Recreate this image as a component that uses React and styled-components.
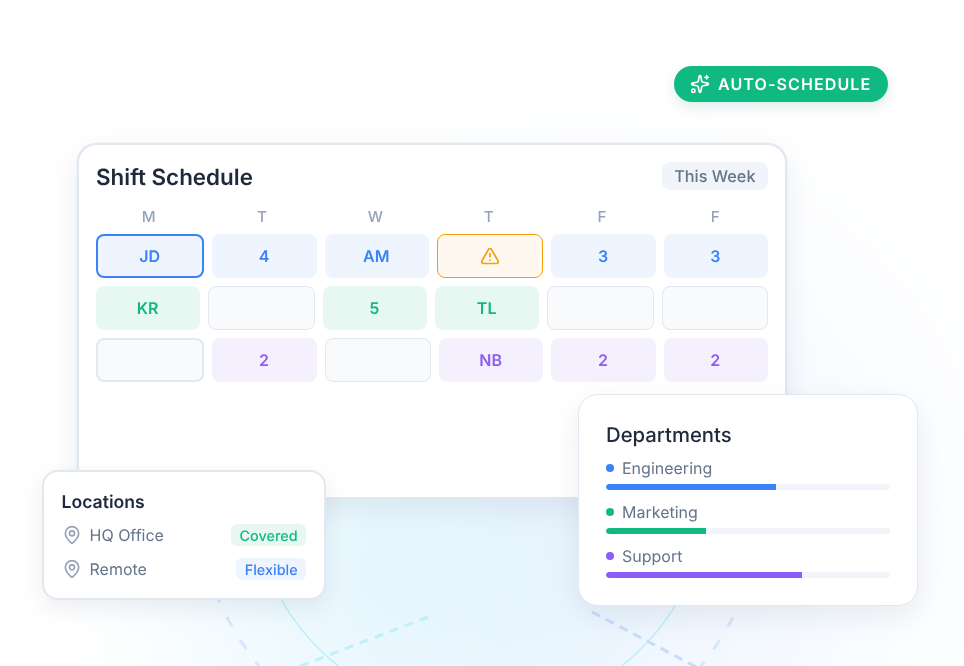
import React from "react";
import styled, { createGlobalStyle } from "styled-components";
import { Sparkles, TriangleAlert, MapPin } from "lucide-react";

const GlobalStyle = createGlobalStyle`
  html, body {
    margin: 0;
    padding: 0;
    background: #fff;
    font-family: "Inter", "Liberation Sans", sans-serif;
    text-rendering: geometricPrecision;
  }
  * {
    box-sizing: border-box;
  }
`;

const Stage = styled.div`
  position: relative;
  width: 964px;
  height: 666px;
  overflow: hidden;
  padding: 143px 177px 0 77px;
  will-change: transform;
  background:
    radial-gradient(circle at 380px 575px, rgba(186, 236, 253, 0.26) 0, rgba(186, 236, 253, 0.15) 160px, rgba(186, 236, 253, 0) 320px),
    radial-gradient(circle at 590px 540px, rgba(191, 219, 254, 0.3) 0, rgba(191, 219, 254, 0.17) 200px, rgba(219, 234, 254, 0.1) 340px, rgba(255, 255, 255, 0) 470px),
    #fff;
`;

const Backdrop = styled.svg`
  position: absolute;
  left: 0;
  top: 0;
  pointer-events: none;
`;

const ScheduleCard = styled.section`
  position: relative;
  height: 356px;
  padding: 18px 17px 0 17px;
  background: #fff;
  border: 2px solid #e2e8f0;
  border-radius: 20px;
  box-shadow: 0 0 0 0.6px rgba(226, 232, 240, 0.7), 0 10px 30px rgba(30, 41, 59, 0.08);
`;

const CardHeader = styled.header`
  display: flex;
  align-items: center;
  justify-content: space-between;
  height: 28px;
`;

const Title = styled.h2`
  margin: 0;
  font-size: 22.4px;
  font-weight: 600;
  color: #1e293b;
`;

const RangeTag = styled.span`
  display: flex;
  align-items: center;
  height: 28px;
  margin-top: -2px;
  padding: 0 12.5px;
  border-radius: 8px;
  background: #f1f5f9;
  color: #64748b;
  font-size: 16.3px;
  font-weight: 500;
`;

const DayRow = styled.div`
  display: flex;
  gap: 8px;
  margin-top: 16px;
  margin-bottom: 7px;
`;

const Day = styled.span`
  flex: 1;
  height: 20px;
  line-height: 20px;
  text-align: center;
  color: #94a3b8;
  font-size: 15.2px;
  font-weight: 500;
`;

const ShiftRows = styled.div`
  display: flex;
  flex-direction: column;
  gap: 8px;
`;

const ShiftRow = styled.div`
  display: flex;
  gap: 8px;
`;

const tones = {
  blue: "background:#eff5fe;color:#3b82f6;",
  green: "background:#e7f8f2;color:#10b981;",
  purple: "background:#f5f0fe;color:#8b5cf6;",
  empty: "background:#f8fafc;border:1px solid #e2e8f0;",
  hollow: "background:#f8fafc;border:2px solid #e2e8f0;",
  active: "background:#eff5fe;color:#3b82f6;border:2px solid #3b82f6;",
  warn: "background:#fff8f0;color:#f59e0b;border:1px solid #f59e0b;",
};

const Cell = styled.div`
  flex: 1;
  height: 44px;
  display: flex;
  align-items: center;
  justify-content: center;
  padding-right: 1px;
  border-radius: 8px;
  font-size: 16px;
  font-weight: 600;
  ${(p) => tones[p.$tone]}
`;

const AutoPill = styled.div`
  position: absolute;
  left: 674px;
  top: 66px;
  width: 214px;
  height: 36px;
  display: flex;
  align-items: center;
  gap: 8px;
  padding-left: 16px;
  border-radius: 18px;
  background: #10b981;
  color: #fff;
  font-size: 16px;
  font-weight: 600;
  letter-spacing: 1.12px;
  box-shadow: 0 4px 12px rgba(16, 185, 129, 0.1), 0 6px 16px rgba(30, 41, 59, 0.05);
`;

const LocationsCard = styled.aside`
  position: absolute;
  left: 42px;
  top: 470px;
  width: 284px;
  height: 130px;
  padding: 19px 18px 0 17.5px;
  background: #fff;
  border: 2px solid #e2e8f0;
  border-radius: 16px;
  box-shadow: 0 8px 24px rgba(30, 41, 59, 0.08);
`;

const LocationsTitle = styled.h3`
  margin: 0 0 3px;
  height: 24px;
  line-height: 24px;
  font-size: 17.6px;
  font-weight: 600;
  color: #1e293b;
`;

const LocationRow = styled.div`
  display: flex;
  align-items: center;
  height: 34px;
  color: #64748b;
  font-size: 16px;
  svg {
    color: #94a3b8;
    margin-right: 8px;
  }
`;

const Badge = styled.span`
  margin-left: auto;
  display: flex;
  align-items: center;
  height: 22px;
  padding: 2px 8.4px 0;
  border-radius: 6px;
  font-size: 14.4px;
  font-weight: 500;
  ${(p) => tones[p.$tone]}
`;

const DepartmentsCard = styled.aside`
  position: absolute;
  left: 578px;
  top: 394px;
  width: 340px;
  height: 212px;
  padding: 28px 27px 0;
  background: #fff;
  border: 1px solid #e2e8f0;
  border-radius: 20px;
  box-shadow: 0 10px 30px rgba(30, 41, 59, 0.08);
`;

const DepartmentsTitle = styled.h3`
  margin: 0 0 11px;
  height: 24px;
  line-height: 24px;
  font-size: 20.3px;
  font-weight: 450;
  color: #1e293b;
`;

const Department = styled.div`
  margin-bottom: 12px;
`;

const DepartmentLabel = styled.div`
  display: flex;
  align-items: center;
  gap: 8px;
  height: 20px;
  margin-bottom: 6px;
  color: #64748b;
  font-size: 16px;
`;

const Dot = styled.span`
  width: 8px;
  height: 8px;
  border-radius: 50%;
  background: ${(p) => p.$color};
`;

const Track = styled.div`
  height: 6px;
  border-radius: 3px;
  background: #f1f5f9;
  overflow: hidden;
`;

const Fill = styled.div`
  height: 100%;
  width: ${(p) => p.$pct}%;
  background: ${(p) => p.$color};
  border-radius: 3px 0 0 3px;
`;

const days = ["M", "T", "W", "T", "F", "F"];

const rows = [
  [
    { tone: "active", text: "JD" },
    { tone: "blue", text: "4" },
    { tone: "blue", text: "AM" },
    { tone: "warn", icon: true },
    { tone: "blue", text: "3" },
    { tone: "blue", text: "3" },
  ],
  [
    { tone: "green", text: "KR" },
    { tone: "empty" },
    { tone: "green", text: "5" },
    { tone: "green", text: "TL" },
    { tone: "empty" },
    { tone: "empty" },
  ],
  [
    { tone: "hollow" },
    { tone: "purple", text: "2" },
    { tone: "empty" },
    { tone: "purple", text: "NB" },
    { tone: "purple", text: "2" },
    { tone: "purple", text: "2" },
  ],
];

const departments = [
  { name: "Engineering", color: "#3b82f6", pct: 60 },
  { name: "Marketing", color: "#10b981", pct: 35.2 },
  { name: "Support", color: "#8b5cf6", pct: 69 },
];

export default function App() {
  return (
    <Stage>
      <GlobalStyle />
      <Backdrop width="964" height="666" viewBox="0 0 964 666" fill="none">
        <circle cx="480" cy="486" r="229" stroke="#bdeefb" strokeWidth="1.5" />
        <circle cx="480" cy="486" r="285" stroke="#d6e6fd" strokeWidth="3" strokeDasharray="11 15.6" strokeDashoffset="-3.3" />
        <path d="M428 617L298 667" stroke="#bff0fb" strokeWidth="3" strokeDasharray="9 7" />
        <path d="M592 612L700 669" stroke="#c9dcfb" strokeWidth="3" strokeDasharray="9 6.5" />
      </Backdrop>

      <ScheduleCard>
        <CardHeader>
          <Title>Shift Schedule</Title>
          <RangeTag>This Week</RangeTag>
        </CardHeader>
        <DayRow>
          {days.map((d, i) => (
            <Day key={i}>{d}</Day>
          ))}
        </DayRow>
        <ShiftRows>
          {rows.map((row, r) => (
            <ShiftRow key={r}>
              {row.map((cell, c) => (
                <Cell key={c} $tone={cell.tone}>
                  {cell.icon ? <TriangleAlert size={20} strokeWidth={2} /> : cell.text}
                </Cell>
              ))}
            </ShiftRow>
          ))}
        </ShiftRows>
      </ScheduleCard>

      <AutoPill>
        <Sparkles size={20} strokeWidth={2} />
        AUTO-SCHEDULE
      </AutoPill>

      <LocationsCard>
        <LocationsTitle>Locations</LocationsTitle>
        <LocationRow>
          <MapPin size={20} strokeWidth={2} />
          HQ Office
          <Badge $tone="green">Covered</Badge>
        </LocationRow>
        <LocationRow>
          <MapPin size={20} strokeWidth={2} />
          Remote
          <Badge $tone="blue">Flexible</Badge>
        </LocationRow>
      </LocationsCard>

      <DepartmentsCard>
        <DepartmentsTitle>Departments</DepartmentsTitle>
        {departments.map((d) => (
          <Department key={d.name}>
            <DepartmentLabel>
              <Dot $color={d.color} />
              {d.name}
            </DepartmentLabel>
            <Track>
              <Fill $color={d.color} $pct={d.pct} />
            </Track>
          </Department>
        ))}
      </DepartmentsCard>
    </Stage>
  );
}
